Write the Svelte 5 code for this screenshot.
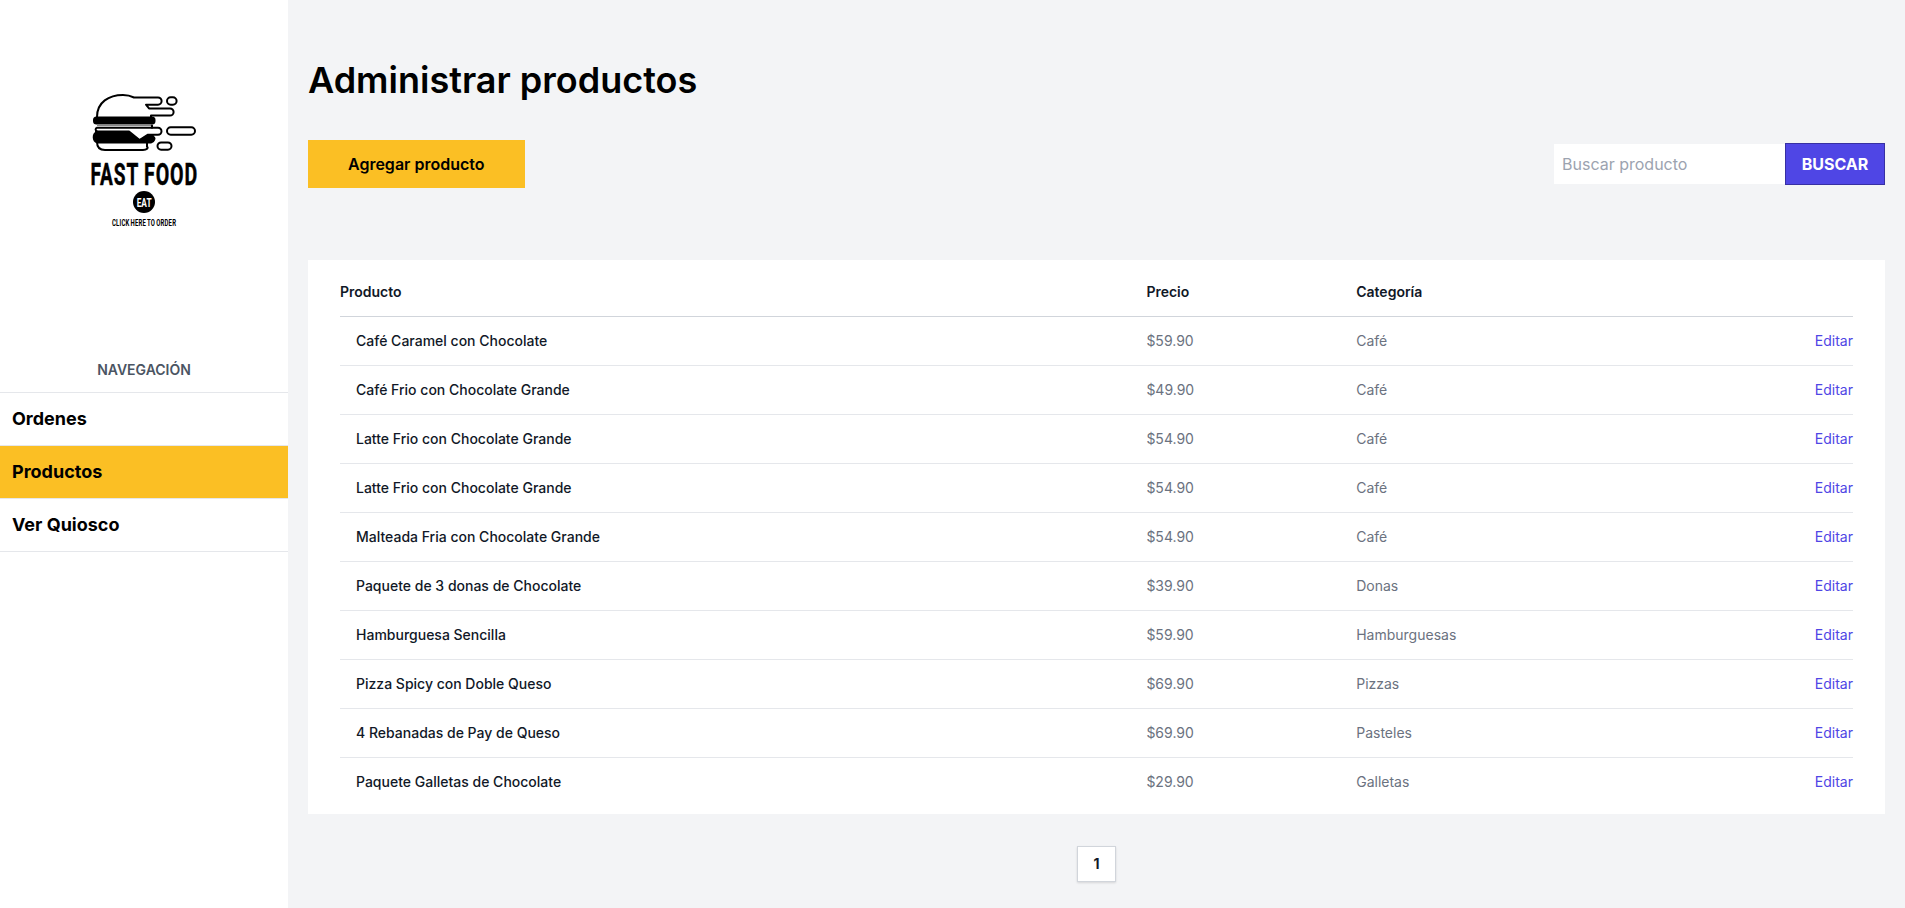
<script>
  const links = ['Ordenes', 'Productos', 'Ver Quiosco'];
  const products = [
    ['Café Caramel con Chocolate', '$59.90', 'Café'],
    ['Café Frio con Chocolate Grande', '$49.90', 'Café'],
    ['Latte Frio con Chocolate Grande', '$54.90', 'Café'],
    ['Latte Frio con Chocolate Grande', '$54.90', 'Café'],
    ['Malteada Fria con Chocolate Grande', '$54.90', 'Café'],
    ['Paquete de 3 donas de Chocolate', '$39.90', 'Donas'],
    ['Hamburguesa Sencilla', '$59.90', 'Hamburguesas'],
    ['Pizza Spicy con Doble Queso', '$69.90', 'Pizzas'],
    ['4 Rebanadas de Pay de Queso', '$69.90', 'Pasteles'],
    ['Paquete Galletas de Chocolate', '$29.90', 'Galletas']
  ];
</script>

<div class="page">
  <aside>
    <svg class="logo" viewBox="80 84 130 150" width="130" height="150" aria-label="Fast Food">
      <g fill="none" stroke="#000" stroke-width="2" stroke-linejoin="round" stroke-linecap="round">
        <path d="M97 117C97 102 109 95 123 95C128 95 131 96 134 97.500H158a3.600 3.600 0 0 1 0 7.200H146L149 108.400H170a3.600 3.600 0 0 1 0 7.200H151V118" />
        <rect x="167" y="97.300" width="9.600" height="7.400" rx="3.700" />
        <path d="M152 125.500V127.700H158a3.500 3.500 0 0 1 0 7H148L139.500 140L129 131.500H96" />
        <path d="M97 127.700H152M97 131.500a2 2 0 0 1 0-3.800" />
        <rect x="167" y="127.300" width="28" height="7.400" rx="3.700" />
        <rect x="157.500" y="142.500" width="14" height="7.200" rx="3.600" />
        <path d="M97 142C97 147 100 150 105 150H143C147 150 148.500 148 147 146.500V143" />
      </g>
      <rect x="93" y="116.500" width="62.500" height="8" rx="3.500" />
      <path d="M97 125.200H151" stroke="#888" stroke-width="1.500" />
      <path d="M96 131.500H128L139.500 139.500L148 134.500H153L155.500 138C155.500 141 153 143.500 150 143.500H97C91.500 142 91.500 133 96 131.500Z" />
      <circle cx="144" cy="202" r="11" />
      <g class="lettering">
        <text class="brand" transform="translate(90.400 184.800) scale(.58 1)" font-size="32" textLength="84" lengthAdjust="spacingAndGlyphs">FAST</text>
        <text class="brand" transform="translate(144 184.800) scale(.58 1)" font-size="32" textLength="93.500" lengthAdjust="spacingAndGlyphs">FOOD</text>
        <text transform="translate(136.700 206.700) scale(.56 1)" font-size="13.500" textLength="26.500" lengthAdjust="spacingAndGlyphs" fill="#fff">EAT</text>
        <text class="tagline" transform="translate(112 225.700) scale(.6 1)" font-size="9.300" textLength="107" lengthAdjust="spacingAndGlyphs">CLICK HERE TO ORDER</text>
      </g>
    </svg>
    <p class="caption">NAVEGACIÓN</p>
    <nav>
      {#each links as link}
        <a href="#top" class:active={link === 'Productos'}>{link}</a>
      {/each}
    </nav>
  </aside>

  <main>
    <h1>Administrar productos</h1>
    <div class="toolbar">
      <a class="add" href="#top">Agregar producto</a>
      <form>
        <input type="text" placeholder="Buscar producto" />
        <button type="button">BUSCAR</button>
      </form>
    </div>

    <section class="card">
      <div class="row head">
        <span>Producto</span><span>Precio</span><span>Categoría</span><span></span>
      </div>
      {#each products as [name, price, category]}
        <div class="row">
          <span class="name">{name}</span>
          <span>{price}</span>
          <span>{category}</span>
          <a href="#top">Editar</a>
        </div>
      {/each}
    </section>

    <div class="pages"><a href="#top">1</a></div>
  </main>
</div>

<style>
  :global(body) {
    margin: 0;
    overflow: hidden;
  }
  .page, .page * {
    box-sizing: border-box;
  }
  .page {
    display: flex;
    height: 908px;
    font-family: Inter, sans-serif;
    font-size: 16px;
    line-height: 24px;
    color: #000;
    background: #fff;
  }
  a {
    color: inherit;
    text-decoration: none;
  }
  aside {
    width: 288px;
    flex: none;
  }
  .logo {
    display: block;
    margin: 84px 0 0 80px;
  }
  .lettering {
    font-family: Roboto, sans-serif;
    font-weight: 700;
  }
  .brand {
    letter-spacing: 1.5px;
    stroke: #000;
    stroke-width: 0.5px;
  }
  .tagline {
    letter-spacing: 0.3px;
    word-spacing: -1px;
  }
  .caption {
    margin: 126px 0 12px;
    text-align: center;
    font-size: 14px;
    line-height: 20px;
    font-weight: 600;
    color: #4b5563;
  }
  nav {
    border-top: 1px solid #e5e7eb;
  }
  nav a {
    display: block;
    padding: 12px;
    border-bottom: 1px solid #e5e7eb;
    font-size: 18px;
    line-height: 28px;
    font-weight: 700;
  }
  nav a.active {
    background: #fbbf24;
  }
  main {
    flex: 1;
    padding: 60px 20px 0;
    background: #f3f4f6;
  }
  h1 {
    margin: 0 0 40px;
    font-size: 36px;
    line-height: 40px;
    font-weight: 600;
  }
  .toolbar {
    display: flex;
    align-items: center;
    justify-content: space-between;
  }
  .add {
    padding: 12px 40px;
    background: #fbbf24;
    font-weight: 600;
  }
  form {
    display: flex;
    align-items: center;
  }
  input {
    width: 231px;
    height: 40px;
    padding: 8px;
    border: 0;
    border-radius: 0;
    background: #fff;
    font: inherit;
  }
  input::placeholder {
    color: #9ca3af;
    opacity: 1;
  }
  button {
    width: 100px;
    height: 42px;
    padding: 0;
    border: 1px solid #3730a3;
    background: #4f46e5;
    color: #fff;
    font: inherit;
    font-weight: 700;
  }
  .card {
    margin-top: 72px;
    padding: 8px 32px;
    background: #fff;
  }
  .row {
    display: grid;
    grid-template-columns: 806.4px 209.8px 1fr auto;
    padding: 14px 0;
    border-top: 1px solid #e5e7eb;
    font-size: 14px;
    line-height: 20px;
    color: #6b7280;
  }
  .row.head {
    border-top: 0;
    font-weight: 600;
    color: #111827;
  }
  .row.head + .row {
    border-top-color: #d1d5db;
  }
  .name {
    padding-left: 16px;
    font-weight: 500;
    color: #111827;
  }
  .row a {
    color: #4f46e5;
  }
  .pages {
    display: flex;
    justify-content: center;
    margin-top: 32px;
  }
  .pages a {
    width: 39px;
    height: 36px;
    border: 1px solid #d1d5db;
    background: #fff;
    box-shadow: 0 1px 2px rgba(0, 0, 0, 0.12);
    text-align: center;
    font-size: 14px;
    line-height: 34px;
    font-weight: 700;
    color: #111827;
  }
</style>
